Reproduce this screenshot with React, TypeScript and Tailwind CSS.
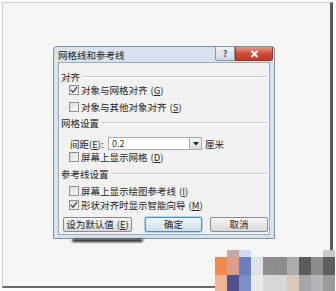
import type { ReactNode } from "react";

const font = { fontFamily: '"Noto Sans CJK SC", "Noto Sans", sans-serif' };

function Hotkey({ k }: { k: string }) {
  return (
    <span className="ml-[3px]">
      (<span className="underline">{k}</span>)
    </span>
  );
}

function CheckBox({ checked }: { checked?: boolean }) {
  return (
    <div className="w-[10px] h-[10px] border border-[#8e8f8f] bg-gradient-to-br from-[#dcdcdc] to-[#fafafa] flex items-center justify-center">
      {checked && (
        <svg width="8" height="8" viewBox="0 0 8 8">
          <path d="M1 4 L3 6.2 L7 1" fill="none" stroke="#4a4a4a" strokeWidth="1.3" />
        </svg>
      )}
    </div>
  );
}

function CheckRow({ label, hotkey, checked, className }: { label: string; hotkey: string; checked?: boolean; className?: string }) {
  return (
    <div className={`flex items-center h-[12px] pl-[10px] ${className ?? ""}`}>
      <CheckBox checked={checked} />
      <span className="ml-[2px] text-[9.5px] leading-[12px] text-[#262626] whitespace-nowrap">
        {label}
        <Hotkey k={hotkey} />
      </span>
    </div>
  );
}

function Section({ title, className }: { title: string; className?: string }) {
  return (
    <div className={`flex items-center h-[12px] pl-[2px] pr-[2px] ${className ?? ""}`}>
      <span className="text-[9.5px] leading-[12px] text-[#262626] whitespace-nowrap">{title}</span>
      <div className="flex-1 ml-[3px] h-[2px] border-t border-[#c5ccd4] border-b border-b-white" />
    </div>
  );
}

function Btn({ children, primary, className }: { children: ReactNode; primary?: boolean; className?: string }) {
  return (
    <div
      className={`h-[15px] rounded-[2px] flex items-center justify-center text-[9.5px] text-[#262626] ${
        primary
          ? "border border-[#4f8fb4] bg-gradient-to-b from-[#eef4f9] to-[#d2e0eb] shadow-[0_0_0_1px_#b2d6ea]"
          : "border border-[#8a8a8a] bg-gradient-to-b from-[#f6f6f6] to-[#d9d9d9]"
      } ${className ?? ""}`}
    >
      {children}
    </div>
  );
}

const mosaicTop = ["#f5f5f5", "#c2aaa8", "#d4d9ee", "#f5f5f5", "#f5f5f5", "#f5f5f5", "#f5f5f5", "#f5f5f5", "#f5f5f5", "#c9c9c9"];
const mosaicA = ["#ee8a50", "#db9e86", "#6a7ec0", "#dde2ea", "#8f8f8f", "#8c8c8c", "#adadad", "#5b5b5b", "#8d8d8d", "#5e5e5e"];
const mosaicB = ["#f0b491", "#4f508f", "#7b8fcb", "#e8e9ee", "#d8d8d8", "#d7d7d7", "#dcc7b7", "#a5a5ab", "#b5b5b9", "#9a9a9a"];

export default function App() {
  return (
    <div className="relative w-[336px] h-[291px] bg-[#fbfbfb] overflow-hidden" style={font}>
      {/* screen frame */}
      <div className="ml-[2px] mt-[2px] w-[331px] h-[286px] border-l border-t border-[#cdcdcd] border-r-[3px] border-r-[#5a5a5a] border-b-[2px] border-b-[#6a6a6a] bg-[#f5f5f5] pl-[50px] pt-[43px]">
        {/* dialog */}
        <div className="w-[222px] h-[193px] border border-[#7d92a8] rounded-t-[4px] bg-[#d8e2ec] flex flex-col">
          <div className="h-[15px] flex items-start justify-between">
            <span className="pl-[4px] pt-[2px] text-[9.5px] leading-[12px] text-[#222]">网格线和参考线</span>
            <div className="flex mr-[1px]">
              <div className="w-[20px] h-[14px] border border-t-0 border-[#8796a8] rounded-bl-[3px] bg-gradient-to-b from-[#eef2f6] to-[#cdd6e0] flex items-center justify-center text-[9px] font-bold text-[#4d5a6a]">
                ?
              </div>
              <div className="w-[38px] h-[14px] border border-t-0 border-[#8e3a2e] rounded-br-[3px] bg-gradient-to-b from-[#e39a8a] via-[#cf4c38] to-[#c23a26] flex items-center justify-center">
                <svg width="9" height="8" viewBox="0 0 9 8">
                  <path d="M1.5 1 L7.5 7 M7.5 1 L1.5 7" stroke="#fff" strokeWidth="2" />
                </svg>
              </div>
            </div>
          </div>

          <div className="mx-[4px] mb-[3px] flex-1 border border-[#9cabba] bg-[#f1f1f1] pt-[8px] flex flex-col">
            <Section title="对齐" />
            <CheckRow className="mt-[1px]" label="对象与网格对齐" hotkey="G" checked />
            <CheckRow className="mt-[5px]" label="对象与其他对象对齐" hotkey="S" />
            <Section className="mt-[4px]" title="网格设置" />
            <div className="mt-[8px] h-[13px] flex items-center pl-[11px]">
              <span className="w-[38px] text-[9.5px] leading-[12px] text-[#262626] whitespace-nowrap">
                间距(<span className="underline">E</span>):
              </span>
              <div className="w-[94px] h-[13px] border border-[#a5acb5] bg-white flex">
                <span className="flex-1 pl-[3px] text-[9px] leading-[11px] text-[#333]">0.2</span>
                <div className="w-[12px] border-l border-[#a5acb5] bg-gradient-to-b from-[#f5f5f5] to-[#dcdcdc] flex items-center justify-center">
                  <svg width="6" height="4" viewBox="0 0 6 4">
                    <path d="M0 0 L6 0 L3 3.5 Z" fill="#222" />
                  </svg>
                </div>
              </div>
              <span className="ml-[3px] text-[9.5px] leading-[12px] text-[#262626]">厘米</span>
            </div>
            <CheckRow className="mt-[1px]" label="屏幕上显示网格" hotkey="D" />
            <Section className="mt-[5px]" title="参考线设置" />
            <CheckRow className="mt-[5px]" label="屏幕上显示绘图参考线" hotkey="I" />
            <CheckRow className="mt-[2px]" label="形状对齐时显示智能向导" hotkey="M" checked />
            <div className="mt-[6px] flex pl-[4px]">
              <Btn className="w-[69px]">
                设为默认值<Hotkey k="E" />
              </Btn>
              <Btn primary className="ml-[13px] w-[57px]">
                确定
              </Btn>
              <Btn className="ml-[8px] w-[58px]">取消</Btn>
            </div>
          </div>
        </div>
        {/* shadow smear under dialog */}
        <div className="ml-[19px] w-[71px] h-[3px] rounded-full bg-[#1e1e1e] blur-[1px]" />
      </div>

      {/* pixelated watermark */}
      <div className="absolute left-[215px] top-[250px] flex flex-col">
        <div className="flex">
          {mosaicTop.map((c, i) => (
            <div key={i} className="w-[12px] h-[7px]" style={{ backgroundColor: c }} />
          ))}
        </div>
        <div className="flex">
          {mosaicA.map((c, i) => (
            <div key={i} className="w-[12px] h-[18px]" style={{ backgroundColor: c }} />
          ))}
        </div>
        <div className="flex">
          {mosaicB.map((c, i) => (
            <div key={i} className="w-[12px] h-[16px]" style={{ backgroundColor: c }} />
          ))}
        </div>
      </div>
    </div>
  );
}
